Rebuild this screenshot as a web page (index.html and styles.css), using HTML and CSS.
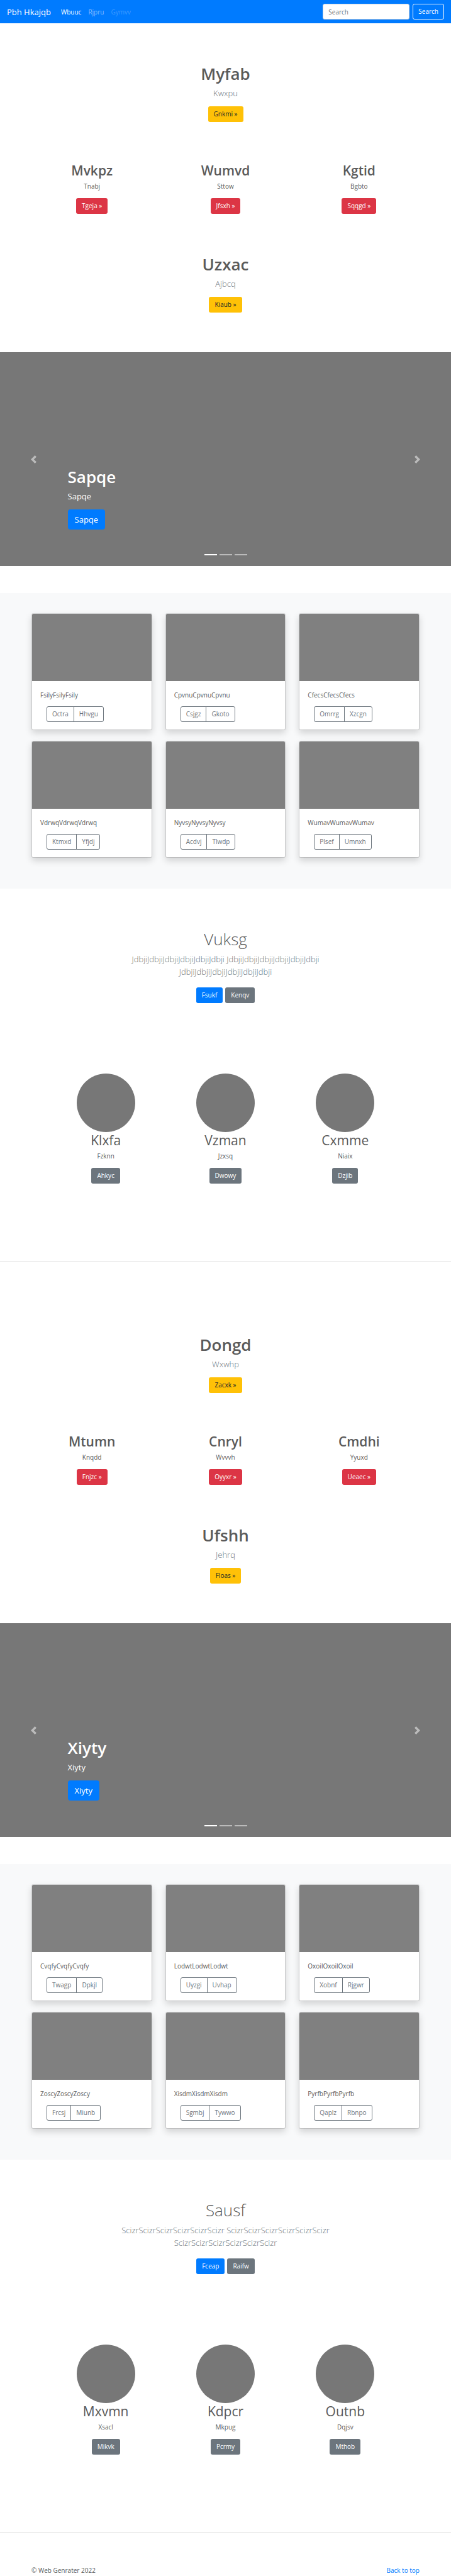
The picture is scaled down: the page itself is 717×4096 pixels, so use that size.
FILE: index.html
```html
<!DOCTYPE html>
<html lang="en">
<head>
<meta charset="utf-8">
<meta name="viewport" content="width=device-width, initial-scale=1">
<title>Pbh Hkajqb</title>
<link rel="stylesheet" href="styles.css">
</head>
<body id="top">
<header class="navbar">
  <a class="brand" href="#top">Pbh Hkajqb</a>
  <nav class="nav">
    <a class="nav-link active" href="#">Wbuuc</a>
    <a class="nav-link" href="#">Rjpru</a>
    <a class="nav-link disabled" href="#">Gymvv</a>
  </nav>
  <form class="search">
    <input class="search-input" type="search" placeholder="Search" aria-label="Search">
    <button class="btn btn-outline-light" type="button">Search</button>
  </form>
</header>
<main>
  <section class="block">
    <div class="hero">
      <h1 class="title">Myfab</h1>
      <p class="lead">Kwxpu</p>
      <a class="btn btn-warning" href="#">Gnkmi »</a>
    </div>
    <div class="trio">
      <div class="item"><h2 class="subtitle strong">Mvkpz</h2><p class="text">Tnabj</p><a class="btn btn-danger" href="#">Tgeja »</a></div>
      <div class="item"><h2 class="subtitle strong">Wumvd</h2><p class="text">Sttow</p><a class="btn btn-danger" href="#">Jfsxh »</a></div>
      <div class="item"><h2 class="subtitle strong">Kgtid</h2><p class="text">Bgbto</p><a class="btn btn-danger" href="#">Sqqgd »</a></div>
    </div>
    <div class="hero">
      <h1 class="title">Uzxac</h1>
      <p class="lead">Ajbcq</p>
      <a class="btn btn-warning" href="#">Kiaub »</a>
    </div>
    <div class="carousel">
      <button class="control" type="button" aria-label="Previous"><svg class="chevron" viewBox="0 0 8 8"><path d="M5.25 0l-4 4 4 4 1.5-1.5L4.25 4l2.5-2.5L5.25 0z"/></svg></button>
      <div class="slide">
        <div class="caption">
          <h1 class="title">Sapqe</h1>
          <p class="caption-text">Sapqe</p>
          <a class="btn btn-primary btn-lg" href="#">Sapqe</a>
        </div>
        <div class="indicators"><span class="dash on"></span><span class="dash"></span><span class="dash"></span></div>
      </div>
      <button class="control" type="button" aria-label="Next"><svg class="chevron" viewBox="0 0 8 8"><path d="M2.75 0l-1.5 1.5L3.75 4l-2.5 2.5L2.75 8l4-4-4-4z"/></svg></button>
    </div>
    <div class="album">
      <article class="card"><div class="thumb"></div><div class="card-body"><p class="text">FsilyFsilyFsily</p><div class="group"><button class="btn btn-outline" type="button">Octra</button><button class="btn btn-outline" type="button">Hhvgu</button></div></div></article>
      <article class="card"><div class="thumb"></div><div class="card-body"><p class="text">CpvnuCpvnuCpvnu</p><div class="group"><button class="btn btn-outline" type="button">Csjgz</button><button class="btn btn-outline" type="button">Gkoto</button></div></div></article>
      <article class="card"><div class="thumb"></div><div class="card-body"><p class="text">CfecsCfecsCfecs</p><div class="group"><button class="btn btn-outline" type="button">Omrrg</button><button class="btn btn-outline" type="button">Xzcgn</button></div></div></article>
      <article class="card"><div class="thumb"></div><div class="card-body"><p class="text">VdrwqVdrwqVdrwq</p><div class="group"><button class="btn btn-outline" type="button">Ktmxd</button><button class="btn btn-outline" type="button">Yfjdj</button></div></div></article>
      <article class="card"><div class="thumb"></div><div class="card-body"><p class="text">NyvsyNyvsyNyvsy</p><div class="group"><button class="btn btn-outline" type="button">Acdvj</button><button class="btn btn-outline" type="button">Tlwdp</button></div></div></article>
      <article class="card"><div class="thumb"></div><div class="card-body"><p class="text">WumavWumavWumav</p><div class="group"><button class="btn btn-outline" type="button">Plsef</button><button class="btn btn-outline" type="button">Umnxh</button></div></div></article>
    </div>
    <div class="intro">
      <h1 class="title light">Vuksg</h1>
      <p class="lead">JdbjiJdbjiJdbjiJdbjiJdbjiJdbji JdbjiJdbjiJdbjiJdbjiJdbjiJdbji JdbjiJdbjiJdbjiJdbjiJdbjiJdbji</p>
      <div class="actions"><a class="btn btn-primary" href="#">Fsukf</a><a class="btn btn-secondary" href="#">Kenqv</a></div>
    </div>
    <div class="people">
      <div class="item"><div class="avatar"></div><h2 class="subtitle">Klxfa</h2><p class="text">Fzknn</p><a class="btn btn-secondary" href="#">Ahkyc</a></div>
      <div class="item"><div class="avatar"></div><h2 class="subtitle">Vzman</h2><p class="text">Jzxsq</p><a class="btn btn-secondary" href="#">Dwowy</a></div>
      <div class="item"><div class="avatar"></div><h2 class="subtitle">Cxmme</h2><p class="text">Niaix</p><a class="btn btn-secondary" href="#">Dzjib</a></div>
    </div>
  </section>
  <hr class="divider">
  <section class="block">
    <div class="hero">
      <h1 class="title">Dongd</h1>
      <p class="lead">Wxwhp</p>
      <a class="btn btn-warning" href="#">Zacxk »</a>
    </div>
    <div class="trio">
      <div class="item"><h2 class="subtitle strong">Mtumn</h2><p class="text">Knqdd</p><a class="btn btn-danger" href="#">Fnjzc »</a></div>
      <div class="item"><h2 class="subtitle strong">Cnryl</h2><p class="text">Wvvvh</p><a class="btn btn-danger" href="#">Oyyxr »</a></div>
      <div class="item"><h2 class="subtitle strong">Cmdhi</h2><p class="text">Yyuxd</p><a class="btn btn-danger" href="#">Ueaec »</a></div>
    </div>
    <div class="hero">
      <h1 class="title">Ufshh</h1>
      <p class="lead">Jehrq</p>
      <a class="btn btn-warning" href="#">Floas »</a>
    </div>
    <div class="carousel">
      <button class="control" type="button" aria-label="Previous"><svg class="chevron" viewBox="0 0 8 8"><path d="M5.25 0l-4 4 4 4 1.5-1.5L4.25 4l2.5-2.5L5.25 0z"/></svg></button>
      <div class="slide">
        <div class="caption">
          <h1 class="title">Xiyty</h1>
          <p class="caption-text">Xiyty</p>
          <a class="btn btn-primary btn-lg" href="#">Xiyty</a>
        </div>
        <div class="indicators"><span class="dash on"></span><span class="dash"></span><span class="dash"></span></div>
      </div>
      <button class="control" type="button" aria-label="Next"><svg class="chevron" viewBox="0 0 8 8"><path d="M2.75 0l-1.5 1.5L3.75 4l-2.5 2.5L2.75 8l4-4-4-4z"/></svg></button>
    </div>
    <div class="album">
      <article class="card"><div class="thumb"></div><div class="card-body"><p class="text">CvqfyCvqfyCvqfy</p><div class="group"><button class="btn btn-outline" type="button">Twagp</button><button class="btn btn-outline" type="button">Dpkjl</button></div></div></article>
      <article class="card"><div class="thumb"></div><div class="card-body"><p class="text">LodwtLodwtLodwt</p><div class="group"><button class="btn btn-outline" type="button">Uyzgi</button><button class="btn btn-outline" type="button">Uvhap</button></div></div></article>
      <article class="card"><div class="thumb"></div><div class="card-body"><p class="text">OxoilOxoilOxoil</p><div class="group"><button class="btn btn-outline" type="button">Xobnf</button><button class="btn btn-outline" type="button">Rjgwr</button></div></div></article>
      <article class="card"><div class="thumb"></div><div class="card-body"><p class="text">ZoscyZoscyZoscy</p><div class="group"><button class="btn btn-outline" type="button">Frcsj</button><button class="btn btn-outline" type="button">Miunb</button></div></div></article>
      <article class="card"><div class="thumb"></div><div class="card-body"><p class="text">XisdmXisdmXisdm</p><div class="group"><button class="btn btn-outline" type="button">Sgmbj</button><button class="btn btn-outline" type="button">Tywwo</button></div></div></article>
      <article class="card"><div class="thumb"></div><div class="card-body"><p class="text">PyrfbPyrfbPyrfb</p><div class="group"><button class="btn btn-outline" type="button">Qaplz</button><button class="btn btn-outline" type="button">Rbnpo</button></div></div></article>
    </div>
    <div class="intro">
      <h1 class="title light">Sausf</h1>
      <p class="lead">ScizrScizrScizrScizrScizrScizr ScizrScizrScizrScizrScizrScizr ScizrScizrScizrScizrScizrScizr</p>
      <div class="actions"><a class="btn btn-primary" href="#">Fceap</a><a class="btn btn-secondary" href="#">Raifw</a></div>
    </div>
    <div class="people">
      <div class="item"><div class="avatar"></div><h2 class="subtitle">Mxvmn</h2><p class="text">Xsacl</p><a class="btn btn-secondary" href="#">Mikvk</a></div>
      <div class="item"><div class="avatar"></div><h2 class="subtitle">Kdpcr</h2><p class="text">Mkpug</p><a class="btn btn-secondary" href="#">Pcrmy</a></div>
      <div class="item"><div class="avatar"></div><h2 class="subtitle">Outnb</h2><p class="text">Dqjsv</p><a class="btn btn-secondary" href="#">Mthob</a></div>
    </div>
  </section>
  <hr class="divider">
</main>
<footer class="footer">
  <p class="text">© Web Genrater 2022</p>
  <a class="top-link" href="#top">Back to top</a>
</footer>
</body>
</html>
```
FILE: styles.css
```css
* {
  box-sizing: border-box;
}

body {
  margin: 0;
  background: #fff;
  color: #5a5a5a;
  font-family: "Open Sans", "Noto Sans", sans-serif;
  font-size: 10px;
  line-height: 16px;
}

h1,
h2,
p {
  margin: 0;
}

a {
  color: #007bff;
  text-decoration: none;
}

/* Navigation bar */
.navbar {
  display: flex;
  align-items: center;
  height: 37px;
  padding: 0 11px;
  background: #007bff;
}

.brand {
  margin-right: 16px;
  color: #fff;
  font-size: 13px;
  line-height: 20px;
}

.nav {
  display: flex;
  gap: 11px;
}

.nav-link {
  color: rgba(255, 255, 255, 0.5);
}

.nav-link.active {
  color: #fff;
}

.nav-link.disabled {
  color: rgba(255, 255, 255, 0.25);
}

.search {
  display: flex;
  gap: 5px;
  margin-left: auto;
}

.search-input {
  width: 138px;
  height: 25px;
  padding: 0 8px;
  border: 1px solid #ced4da;
  border-radius: 3px;
  background: #fff;
  color: #495057;
  font: inherit;
}

.search-input::placeholder {
  color: #6c757d;
  opacity: 1;
}

/* Buttons */
.btn {
  display: inline-block;
  height: 25px;
  padding: 3px 8px 4px;
  border: 1px solid transparent;
  border-radius: 3px;
  background: none;
  color: #fff;
  font: inherit;
  white-space: nowrap;
}

.btn-outline-light {
  border-color: #f8f9fa;
}

.btn-warning {
  background: #ffc107;
  color: #212529;
}

.btn-danger {
  background: #dc3545;
}

.btn-primary {
  background: #007bff;
}

.btn-secondary {
  background: #6c757d;
}

.btn-outline {
  border-color: #6c757d;
  color: #6c757d;
}

.btn-lg {
  height: 32px;
  padding: 5px 10px;
  border-radius: 4px;
  font-size: 13px;
  line-height: 20px;
}

/* Text */
.title {
  font-size: 26px;
  font-weight: 600;
  line-height: 32px;
}

.title.light {
  font-weight: 300;
}

.subtitle {
  margin-bottom: 4px;
  font-size: 21px;
  font-weight: 400;
  line-height: 26px;
}

.subtitle.strong {
  font-weight: 600;
}

.lead {
  color: #6c757d;
  font-size: 13px;
  font-weight: 300;
  line-height: 20px;
}

/* Sections */
.block {
  padding-top: 64px;
}

.hero {
  display: flex;
  flex-direction: column;
  align-items: center;
}

.hero .lead {
  margin: 5px 0 11px;
}

.item {
  display: flex;
  flex-direction: column;
  align-items: center;
}

.item .text {
  margin-bottom: 11px;
}

.trio {
  display: grid;
  grid-template-columns: repeat(3, 1fr);
  padding: 64px 40px;
}

.carousel {
  display: grid;
  grid-template-columns: 15% 1fr 15%;
  height: 340px;
  margin: 63px 0 43px;
  background: #777;
  color: #fff;
}

.control {
  display: flex;
  align-items: center;
  justify-content: center;
  padding: 0;
  border: 0;
  background: none;
}

.chevron {
  width: 13px;
  height: 13px;
  fill: #fff;
  opacity: 0.5;
}

.slide {
  display: flex;
  flex-direction: column;
  justify-content: flex-end;
}

.caption-text {
  margin: 5px 0 11px;
  font-size: 13px;
  line-height: 20px;
}

.indicators {
  display: flex;
  justify-content: center;
  gap: 4px;
  padding: 39px 0 17px;
}

.dash {
  width: 20px;
  height: 2px;
  background: #fff;
  opacity: 0.5;
}

.dash.on {
  opacity: 1;
}

.album {
  display: grid;
  grid-template-columns: repeat(3, 1fr);
  gap: 17px 21px;
  padding: 32px 50px 49px;
  background: #f8f9fa;
}

.card {
  overflow: hidden;
  border: 1px solid rgba(0, 0, 0, 0.125);
  border-radius: 3px;
  background: #fff;
  background-clip: padding-box;
  box-shadow: 0 5px 11px rgba(0, 0, 0, 0.15);
}

.thumb {
  height: 107px;
  background: #808080;
}

.card-body {
  padding: 14px 13px 12px;
}

.group {
  display: flex;
  margin: 10px 0 0 10px;
}

.group .btn:first-child {
  border-radius: 3px 0 0 3px;
}

.group .btn:last-child {
  margin-left: -1px;
  border-radius: 0 3px 3px 0;
}

.intro {
  display: flex;
  flex-direction: column;
  align-items: center;
  padding: 64px 40px 112px;
  text-align: center;
}

.intro .lead {
  max-width: 400px;
  margin: 6px 0 15px;
}

.actions {
  display: flex;
  gap: 4px;
}

.people {
  display: grid;
  grid-template-columns: repeat(3, 1fr);
  padding: 0 73px 123px;
}

.avatar {
  width: 93px;
  height: 93px;
  border-radius: 50%;
  background: #777;
}

.divider {
  height: 1px;
  margin: 0 0 52px;
  border: 0;
  background: #e6e6e6;
}

.footer {
  display: flex;
  justify-content: space-between;
  padding: 0 50px 1px;
}
```
